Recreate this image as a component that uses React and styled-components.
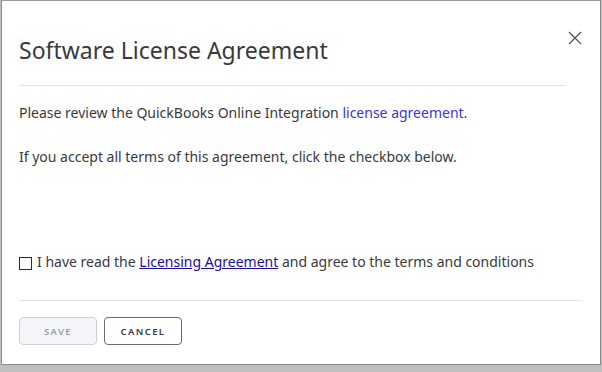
import React, { useState } from 'react';
import styled, { createGlobalStyle } from 'styled-components';

const GlobalStyle = createGlobalStyle`
  html, body {
    margin: 0;
    padding: 0;
    background: #bfbfbf;
  }
  body {
    font-family: "Noto Sans", "Open Sans", sans-serif;
    color: #393a3d;
  }
`;

const Dialog = styled.div`
  box-sizing: border-box;
  width: 600px;
  height: 365px;
  margin-left: 1px;
  background: #fff;
  border: 1px solid #8c8c8c;
  border-top-color: #9a9a9a;
  display: flex;
  flex-direction: column;
  padding: 0 17px 0 17px;
`;

const Header = styled.header`
  display: flex;
  align-items: flex-start;
  justify-content: space-between;
  padding-top: 33px;
`;

const Title = styled.h1`
  margin: 0;
  font-size: 23px;
  font-weight: 400;
  line-height: 32px;
  color: #393a3d;
`;

const CloseButton = styled.button`
  border: none;
  background: none;
  padding: 0;
  margin: -4px 0 0 0;
  width: 16px;
  height: 16px;
  cursor: pointer;
`;

const Divider = styled.hr`
  border: none;
  border-top: 1px solid #e3e3e3;
  margin: ${p => p.$top}px ${p => p.$right}px 0 0;
`;

const Body = styled.div`
  flex: 1;
  font-size: 14px;
  line-height: 20px;
`;

const Paragraph = styled.p`
  margin: ${p => p.$top}px 0 0;
`;

const Link = styled.a`
  color: ${p => (p.$underline ? '#1a0dab' : '#3a36db')};
  text-decoration: ${p => (p.$underline ? 'underline' : 'none')};
  cursor: pointer;
`;

const CheckRow = styled.label`
  display: flex;
  align-items: center;
  gap: 5px;
  margin-top: 85px;
  font-size: 14px;
`;

const Box = styled.span`
  box-sizing: border-box;
  width: 13px;
  height: 13px;
  border: 1.5px solid #2c2c30;
  background: ${p => (p.$checked ? '#2c2c30' : '#fff')};
  margin-top: 3px;
  flex: none;
`;

const Footer = styled.footer`
  display: flex;
  gap: 7px;
  padding: 16px 0 19px;
`;

const Button = styled.button`
  box-sizing: border-box;
  width: 78px;
  height: 28px;
  border-radius: 4px;
  font-family: "Noto Sans", "Open Sans", sans-serif;
  font-size: 9.5px;
  font-weight: 600;
  letter-spacing: 1.4px;
  text-transform: uppercase;
  border: 1px solid ${p => (p.disabled ? '#cfd1d4' : '#6b6c72')};
  background: ${p => (p.disabled ? '#f4f5f8' : '#fff')};
  color: ${p => (p.disabled ? '#9a9ca1' : '#393a3d')};
  padding: 0;
`;

export default function App() {
  const [checked, setChecked] = useState(false);

  return (
    <>
      <GlobalStyle />
      <Dialog>
        <Header>
          <Title>Software License Agreement</Title>
          <CloseButton aria-label="Close">
            <svg width="16" height="16" viewBox="0 0 16 16">
              <path d="M2 2 L14 14 M14 2 L2 14" stroke="#4a4b50" strokeWidth="1.1" fill="none" />
            </svg>
          </CloseButton>
        </Header>
        <Divider $top={19} $right={17} />
        <Body>
          <Paragraph $top={17}>
            Please review the QuickBooks Online Integration <Link>license agreement.</Link>
          </Paragraph>
          <Paragraph $top={24}>
            If you accept all terms of this agreement, click the checkbox below.
          </Paragraph>
          <CheckRow onClick={() => setChecked(!checked)}>
            <Box $checked={checked} />
            <span>
              I have read the <Link $underline>Licensing Agreement</Link> and agree to the terms and conditions
            </span>
          </CheckRow>
        </Body>
        <Divider $top={0} $right={0} />
        <Footer>
          <Button disabled>Save</Button>
          <Button>Cancel</Button>
        </Footer>
      </Dialog>
    </>
  );
}
